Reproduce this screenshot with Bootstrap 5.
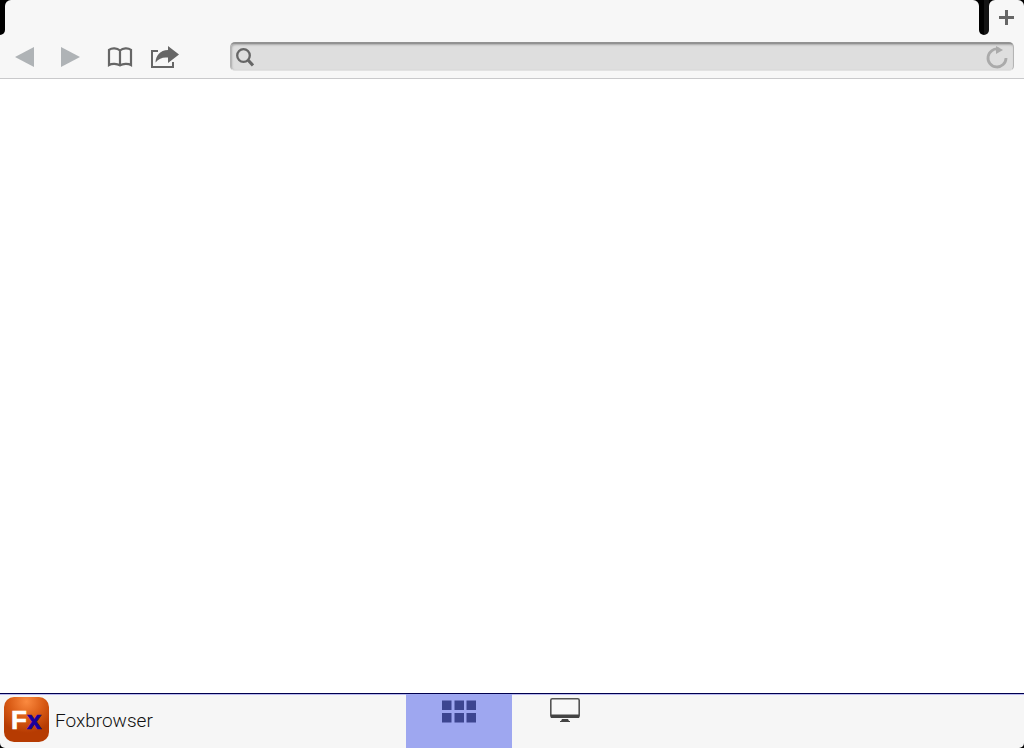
<!DOCTYPE html>
<html lang="en">
<head>
<meta charset="utf-8">
<meta name="viewport" content="width=device-width, initial-scale=1">
<title>Foxbrowser</title>
<link href="https://cdn.jsdelivr.net/npm/bootstrap@5.3.0/dist/css/bootstrap.min.css" rel="stylesheet">
<style>
  :root { --bar: #f7f7f7; }
  body { font-family: "Liberation Sans", Arial, sans-serif; background: #fff; }
  svg { display: block; }
  .chrome { background: var(--bar); border-bottom: 1px solid #c9c9cb; }
  .tab-strip { height: 35px; background: linear-gradient(#000 8px, var(--bar) 8px); }
  .tab-edge { width: 5px; background: #000; border-bottom-right-radius: 5px; }
  .tab-gap { width: 10px; background: linear-gradient(90deg, #000 50%, #141414 50%); border-radius: 0 0 5px 5px; }
  .page-tab, .new-tab { background: var(--bar); border: 0; border-radius: 6px 6px 0 0; }
  .new-tab { width: 35px; }
  .toolbar { height: 43px; padding: 0 10px 0 14px; }
  .tool { border: 0; background: none; padding: 0; }
  .tools { gap: 26px; width: 216px; }
  .page-tools { gap: 16px; }
  .address {
    height: 29px; padding: 0 5px; border-radius: 5px; background: #dedede;
    border: 1px solid #b4b4b4; border-top: 2px solid #929292; border-bottom-color: #e2e2e2;
    box-shadow: inset 1px 1px 2px #aaa;
  }
  .address input { border: 0; background: none; outline: 0; min-width: 0; }
  .dock-frame { background: #000; }
  .dock { height: 55px; background: #f6f6f6; border-top: 1px solid #00004d; box-shadow: inset 0 1px #b9b9f0; border-radius: 0 0 5px 5px; }
  .brand { gap: 6px; padding: 3px 0 0 4px; color: #111; font: 300 19px/24px Roboto, "Liberation Sans", sans-serif; }
  .dock-tab { width: 106px; padding: 4px 0 0; border: 0; background: none; }
  .dock-tab.active { background: #9ea7f0; }
</style>
</head>
<body class="d-flex flex-column min-vh-100">
<header class="chrome">
  <div class="tab-strip d-flex">
    <span class="tab-edge"></span>
    <button class="page-tab flex-grow-1" type="button" aria-label="Current tab"></button>
    <span class="tab-gap"></span>
    <button class="new-tab d-flex align-items-center justify-content-center p-0" type="button" aria-label="New tab">
      <svg width="15" height="15" viewBox="0 0 15 15" fill="#666"><path d="M6 0h3v6h6v3H9v6H6V9H0V6h6z"/></svg>
    </button>
  </div>
  <div class="toolbar d-flex align-items-center">
    <nav class="tools d-flex align-items-center flex-shrink-0" aria-label="Navigation">
      <button class="tool" type="button" aria-label="Back"><svg width="20" height="20" viewBox="0 0 20 20"><path d="M1 10 20 0v20z" fill="#afb3b6"/></svg></button>
      <button class="tool" type="button" aria-label="Forward"><svg width="20" height="20" viewBox="0 0 20 20"><path d="M1 0v20l19-10z" fill="#afb3b6"/></svg></button>
      <div class="page-tools d-flex align-items-center">
        <button class="tool" type="button" aria-label="Bookmarks"><svg width="28" height="20" viewBox="0 0 28 20" fill="none" stroke="#666" stroke-width="2.200"><path d="M14 3.500C11 1 6 .8 3 2.800V18c3-1.800 8-1.500 11 .4 3-1.900 8-2.200 11-.4V2.800C22 .8 17 1 14 3.500zV18"/></svg></button>
        <button class="tool" type="button" aria-label="Share"><svg width="29" height="24" viewBox="0 0 29 24"><path d="M8 6H2v16h21v-5" fill="none" stroke="#666" stroke-width="2"/><path d="M18 1v4C10 5.500 6 10 5.500 17.500 9 13 13 12 18 12.500V18l11-8.500z" fill="#666"/></svg></button>
      </div>
    </nav>
    <form class="address d-flex align-items-center flex-grow-1" role="search">
      <label for="url"><svg width="18" height="19" viewBox="0 0 18 19" fill="none" stroke="#666" role="img" aria-label="Address"><circle cx="7.500" cy="7.500" r="6.300" stroke-width="2.300"/><path d="m12 12 5 5.500" stroke-width="3.200"/></svg></label>
      <input id="url" class="flex-grow-1" type="text">
      <button class="tool" type="button" aria-label="Reload"><svg width="22" height="23" viewBox="0 0 22 23"><path d="M20 12a9 9 0 1 1-7-8.800" fill="none" stroke="#aaa" stroke-width="2.800"/><path d="m10 0 7 4-7 4z" fill="#aaa"/></svg></button>
    </form>
  </div>
</header>
<main class="flex-grow-1"></main>
<footer class="dock-frame">
  <div class="dock d-flex">
    <div class="col">
      <div class="brand d-flex align-items-start">
        <svg width="45" height="45" viewBox="0 0 45 45" role="img" aria-label="Fx">
          <defs><radialGradient id="glow" cx=".5" cy=".1" r=".7"><stop stop-color="#fb8a40"/><stop offset=".55" stop-color="#d95b15"/><stop offset="1" stop-color="#b63b02"/></radialGradient></defs>
          <rect width="45" height="45" rx="10" fill="url(#glow)"/>
          <g font-family="Liberation Sans, Arial, sans-serif" font-weight="700" stroke-width=".6"><text x="7" y="32" font-size="26" fill="#fff" stroke="#fff">F</text><text x="23" y="32" font-size="26" fill="#1a009c" stroke="#1a009c">x</text></g>
        </svg>
        <span class="mt-2 pt-1">Foxbrowser</span>
      </div>
    </div>
    <button class="dock-tab active d-flex justify-content-center align-items-start" type="button" aria-label="Tiles">
      <svg width="36" height="26" viewBox="0 0 36 26" fill="#3c4590"><path d="M1 2.500h9.500v9.500H1zM13.500 2.500H23v9.500h-9.500zM25.500 2.500H35v9.500h-9.500zM1 15h9.500v9.500H1zM13.500 15H23v9.500h-9.500zM25.500 15H35v9.500h-9.500z"/></svg>
    </button>
    <button class="dock-tab d-flex justify-content-center align-items-start" type="button" aria-label="Desktop">
      <svg width="30" height="25" viewBox="0 0 30 25"><rect x=".8" y=".8" width="28.400" height="18.400" rx="1.500" fill="#f8f8f8" stroke="#555" stroke-width="1.600"/><path d="M1 16.500h28V20H1zM12 21h6l1 2h1v1H10v-1h1z" fill="#444"/></svg>
    </button>
    <div class="col"></div>
  </div>
</footer>
<script src="https://cdn.jsdelivr.net/npm/bootstrap@5.3.0/dist/js/bootstrap.bundle.min.js"></script>
</body>
</html>
